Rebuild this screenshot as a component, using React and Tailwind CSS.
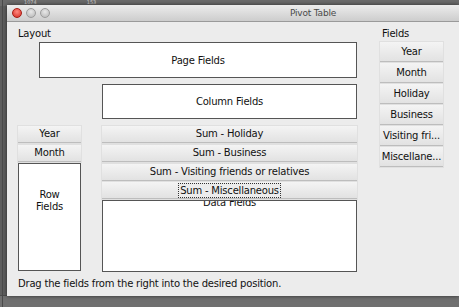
import React from "react";

const font = { fontFamily: '"DejaVu Sans", "Liberation Sans", sans-serif' };

function Btn({ children, className = "" }) {
  return (
    <div
      className={
        "flex items-center justify-center bg-gradient-to-b from-[#f4f4f4] to-[#e2e2e2] border-b border-[#bdbdbd] shadow-[0_0_0_1px_#e0e0e0] text-[10px] text-[#111] leading-none tracking-[-0.2px] " +
        className
      }
    >
      {children}
    </div>
  );
}

export default function App() {
  return (
    <div className="w-[459px] h-[307px] bg-[#5e5e5e] overflow-hidden relative" style={font}>
      {/* background spreadsheet strips */}
      <div className="absolute left-0 top-0 w-[459px] h-[6px] bg-[#6a6a6a] flex text-[5px] text-[#cfcfcf] leading-none">
        <span className="ml-[24px]">1074</span>
        <span className="ml-[50px]">153</span>
      </div>
      <div className="absolute left-0 bottom-0 w-[459px] h-[12px] bg-[#707070] border-t border-[#4a4a4a]" />
      <div className="absolute left-[2px] top-0 w-px h-[307px] bg-[#4a4a4a]" />

      {/* window */}
      <div className="absolute left-[7px] top-[5px] w-[452px] h-[291px] bg-[#ececec] flex flex-col shadow-[0_0_4px_rgba(0,0,0,0.6)]">
        {/* title bar */}
        <div className="h-[17px] bg-gradient-to-b from-[#ececec] to-[#cdcdcd] border-b border-[#9a9a9a] flex items-center relative">
          <div className="flex gap-[4px] ml-[5px]">
            <div className="w-[10px] h-[10px] rounded-full bg-[radial-gradient(circle_at_50%_35%,#ff8a80,#d42a20)] border border-[#a51d15]" />
            <div className="w-[10px] h-[10px] rounded-full bg-[radial-gradient(circle_at_50%_35%,#e8e8e8,#b5b5b5)] border border-[#9c9c9c]" />
            <div className="w-[10px] h-[10px] rounded-full bg-[radial-gradient(circle_at_50%_35%,#e8e8e8,#b5b5b5)] border border-[#9c9c9c]" />
          </div>
          <div className="absolute left-[283px] top-[4px] text-[9px] text-[#4a4a4a] leading-none tracking-[-0.2px]">Pivot Table</div>
        </div>

        {/* content */}
        <div className="flex flex-1 pl-[11px] text-[#111] tracking-[-0.2px]">
          {/* left */}
          <div className="w-[339px] flex flex-col">
            <div className="h-[20px] flex items-center text-[10px] pt-[2px]">Layout</div>
            <div className="ml-[21px] w-[318px] h-[36px] bg-white border border-[#555] flex items-center justify-center text-[10px]">
              Page Fields
            </div>
            <div className="ml-[84px] mt-[6px] w-[255px] h-[35px] bg-white border border-[#555] flex items-center justify-center text-[10px]">
              Column Fields
            </div>
            <div className="flex mt-[7px]">
              <div className="w-[63px] flex flex-col">
                <Btn className="h-[17px]">Year</Btn>
                <Btn className="h-[17px] mt-[2px]">Month</Btn>
                <div className="h-[108px] mt-[1px] bg-white border border-[#555] flex flex-col items-center text-center text-[10px] leading-[12px] pt-[25px]">
                  <span>Row</span>
                  <span>Fields</span>
                </div>
              </div>
              <div className="ml-[21px] w-[255px] flex flex-col">
                <Btn className="h-[17px]">Sum - Holiday</Btn>
                <Btn className="h-[17px] mt-[2px]">Sum - Business</Btn>
                <Btn className="h-[17px] mt-[2px]">Sum - Visiting friends or relatives</Btn>
                <div className="relative h-[91px] mt-[1px] flex flex-col">
                  <div className="h-[72px] mt-[18px] bg-white border border-[#555] flex justify-center text-[10px] leading-none overflow-hidden">
                    <span className="-mt-[3px]">Data Fields</span>
                  </div>
                  <Btn className="absolute left-0 top-0 w-[255px] h-[17px]">
                    <span className="border border-dotted border-[#333] px-[1px] leading-[13px] bg-[#ececec]">
                      Sum - Miscellaneous
                    </span>
                  </Btn>
                </div>
              </div>
            </div>
            <div className="mt-[6px] text-[10px] leading-none">
              Drag the fields from the right into the desired position.
            </div>
          </div>
          {/* right */}
          <div className="ml-[23px] w-[63px] flex flex-col">
            <div className="h-[20px] flex items-center text-[10px] pt-[2px] pl-[2px]">Fields</div>
            <div className="flex flex-col gap-[1px]">
              <Btn className="h-[20px]">Year</Btn>
              <Btn className="h-[20px]">Month</Btn>
              <Btn className="h-[20px]">Holiday</Btn>
              <Btn className="h-[20px]">Business</Btn>
              <Btn className="h-[20px]">Visiting fri...</Btn>
              <Btn className="h-[20px]">Miscellane...</Btn>
            </div>
          </div>
        </div>
      </div>
    </div>
  );
}
